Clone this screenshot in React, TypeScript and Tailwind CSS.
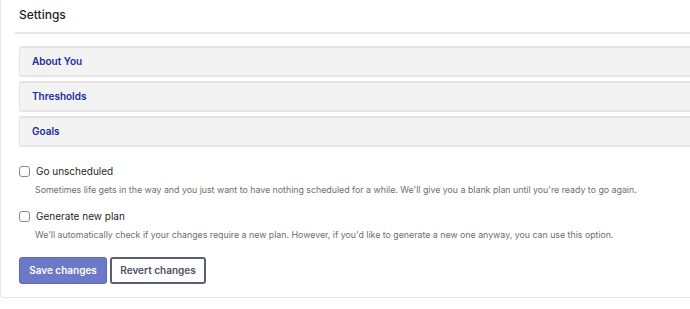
const sections = ['About You', 'Thresholds', 'Goals'];

const options = [
  {
    label: 'Go unscheduled',
    help: "Sometimes life gets in the way and you just want to have nothing scheduled for a while. We'll give you a blank plan until you're ready to go again.",
  },
  {
    label: 'Generate new plan',
    help: "We'll automatically check if your changes require a new plan. However, if you'd like to generate a new one anyway, you can use this option.",
  },
];

export default function App() {
  return (
    <div className="h-[309px] w-[690px] overflow-hidden bg-white font-['Inter',sans-serif]">
      <div className="w-[730px] rounded-bl-[4px] border-b border-l border-[#e6e6e6] bg-white pb-[13px]">
        {/* Header */}
        <div className="ml-[14px] flex h-[34px] items-center border-b-2 border-[#e6e6ec] pb-[2px] pl-[4px]">
          <h1 className="text-[12px] font-medium text-[#1f1f1f]">Settings</h1>
        </div>

        <div className="pl-[18px] pt-[12px]">
          {/* Accordion sections */}
          <div className="flex flex-col gap-[4px]">
            {sections.map((s) => (
              <button
                key={s}
                className="flex h-[31px] items-center rounded-l-[3px] border-y-2 border-l border-[#e4e4e4] bg-[#f3f3f3] pl-[12px] text-left text-[10px] font-semibold text-[#1b2a9c]"
              >
                {s}
              </button>
            ))}
          </div>

          {/* Options */}
          <div className="mt-[17px] flex flex-col gap-[13px]">
            {options.map((o) => (
              <div key={o.label}>
                <label className="flex items-center gap-[6px]">
                  <span className="h-[11px] w-[11px] rounded-[3px] border border-[#8a8a8a] bg-white" />
                  <span className="text-[10px] text-[#1f1f1f]">{o.label}</span>
                </label>
                <p className="mt-[4px] pl-[16px] text-[8.8px] text-[#6e6e6e]">{o.help}</p>
              </div>
            ))}
          </div>

          {/* Actions */}
          <div className="mt-[16px] flex gap-[3px]">
            <button className="h-[27px] w-[88px] rounded-[3px] border border-[#5a68b8] bg-[#6b79c6] text-[10px] font-semibold text-white">
              Save changes
            </button>
            <button className="h-[27px] w-[96px] rounded-[3px] border-2 border-[#5c5f70] bg-white text-[10px] font-semibold text-[#4c5063]">
              Revert changes
            </button>
          </div>
        </div>
      </div>
    </div>
  );
}
